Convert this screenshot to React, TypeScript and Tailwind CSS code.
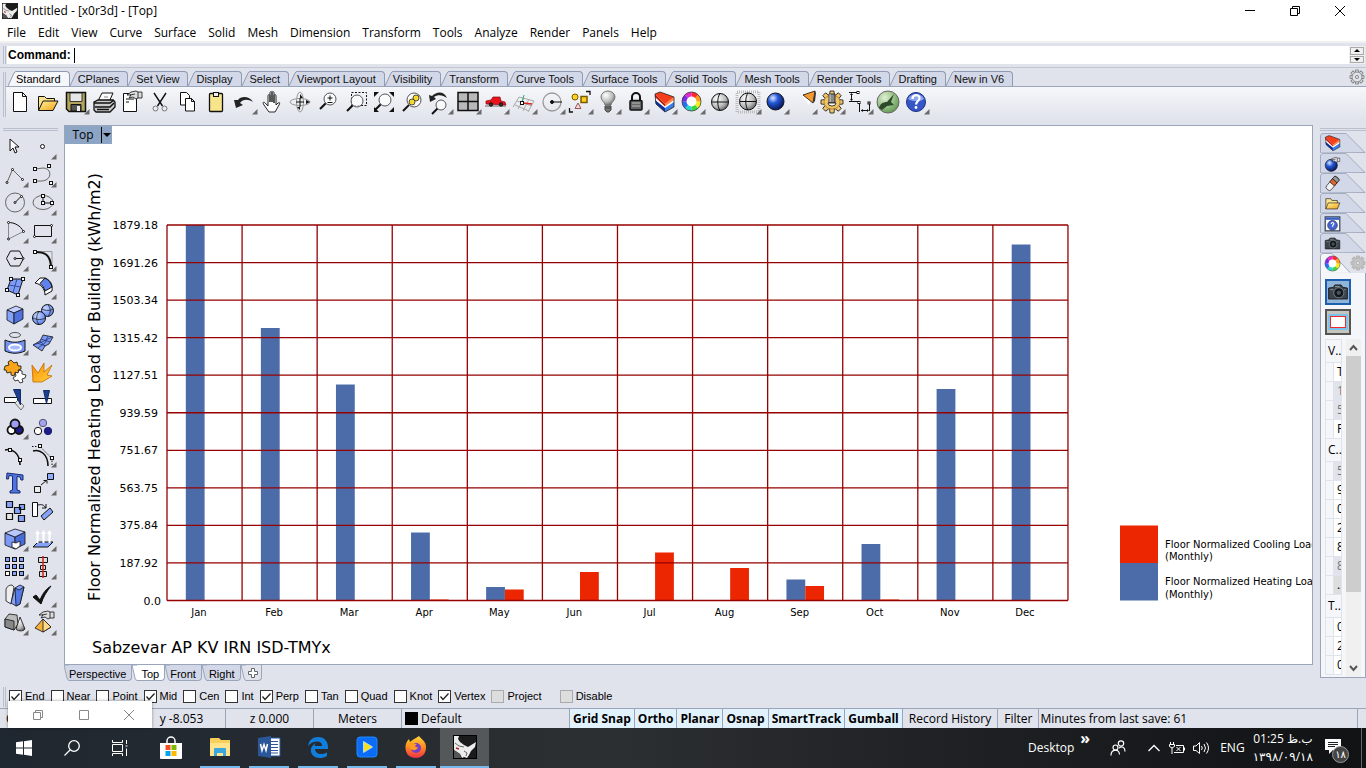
import { useState, type ReactNode } from 'react';

/* ---------- small drawing helpers ---------- */

function Icon({ flyout, children }: { flyout?: boolean; children: ReactNode }) {
  return (
    <svg viewBox="0 0 28 28" className="size-7 shrink-0" fill="none" stroke="#111" strokeWidth="1">
      {children}
      {flyout && <path d="M27.500 21v5.500h-5.500z" fill="#6a6a6a" stroke="none" />}
    </svg>
  );
}

function Sq({ x, y, s = 3 }: { x: number; y: number; s?: number }) {
  return <rect x={x - s / 2} y={y - s / 2} width={s} height={s} fill="#fff" />;
}

function Dot({ x, y }: { x: number; y: number }) {
  return <circle cx={x} cy={y} r="1" fill="#fff" />;
}

function Lens({ x = 16, y = 12, r = 5.5 }: { x?: number; y?: number; r?: number }) {
  return (
    <>
      <path d={`M${x - r * 0.7} ${y + r * 0.7}L${x - r - 4} ${y + r + 4}`} strokeWidth="2" />
      <circle cx={x} cy={y} r={r} fill="#fff" fillOpacity=".7" stroke="#555" />
    </>
  );
}

function ColorWheel({ cx, cy, r }: { cx: number; cy: number; r: number }) {
  const colors = ['#ff2a2a', '#ff9a1f', '#f4ec1c', '#3fd83a', '#25d6d0', '#2b6cf5', '#7a2be8', '#e829c4'];
  return (
    <g stroke="none">
      {colors.map((color, i) => {
        const a = ((i * 45 - 90) * Math.PI) / 180;
        const b = ((i * 45 - 44) * Math.PI) / 180;
        return (
          <path
            key={color}
            fill={color}
            d={`M${cx} ${cy}L${cx + r * Math.cos(a)} ${cy + r * Math.sin(a)}A${r} ${r} 0 0 1 ${cx + r * Math.cos(b)} ${cy + r * Math.sin(b)}Z`}
          />
        );
      })}
      <circle cx={cx} cy={cy} r={r} stroke="#222" strokeWidth=".7" />
      <circle cx={cx} cy={cy} r={r * 0.52} fill="#fff" />
    </g>
  );
}

function Layers() {
  return (
    <g stroke="none">
      <path d="M5 7l10 9 9-7v5l-9 7L5 11z" fill="#fff" />
      <path d="M5 12l10 8v4L6 16z" fill="#0b2f9e" />
      <path d="M15 20l9-6v5l-9 5z" fill="#3a7fe8" />
      <path d="M5 6l10 10v2.500L5 9z" fill="#b81c0c" />
      <path d="M24 9l-9 7v2.500l9-6.500z" fill="#ff8a4a" />
      <path d="M5 6l5-2 14 5-9 7z" fill="#f43e1c" />
      <path d="M5 6l5-2 14 5v10l-9 5-9-8z" fill="none" stroke="#222" strokeWidth=".8" />
    </g>
  );
}

function Gear({ className, fill = 'none' }: { className: string; fill?: string }) {
  const teeth = Array.from({ length: 8 }, (_, i) => i * 45);
  return (
    <svg viewBox="0 0 16 16" className={className} fill={fill} stroke="currentColor">
      {teeth.map((deg) => (
        <path key={deg} d="M6.500 3V1h3v2" transform={`rotate(${deg} 8 8)`} />
      ))}
      <circle cx="8" cy="8" r="5" />
      <circle cx="8" cy="8" r="1.600" fill="#e6e8ee" />
    </svg>
  );
}

function RhinoLogo({ className }: { className: string }) {
  return (
    <svg viewBox="0 0 24 24" className={className}>
      <rect x=".5" y=".5" width="23" height="23" fill="#1b1b1b" stroke="#000" />
      <path d="M1 1h5l-1 3 2 3 4 3 4 2 8-5-1 5-4 4-2 4-2 3-3-1-2 1-2-4-6-4z" fill="#ececec" />
      <path d="M1 15l6 4 1 4H1z" fill="#555" />
      <path d="M2 8l4 3 5 1M11 16l3 2-1 3" stroke="#666" fill="none" />
      <path d="M3 13l3 1" stroke="#c02020" strokeWidth="1.500" />
    </svg>
  );
}

function Camera() {
  return (
    <>
      <path d="M2 9l6-1 2-3h8l2 3 6 1v14H2z" fill="#3b434b" stroke="#111" />
      <circle cx="15" cy="15" r="6.500" fill="#1a1d20" stroke="#8a949c" />
      <circle cx="15" cy="15" r="3.500" fill="#44525e" stroke="#000" />
      <path d="M4 11h4M22 11h2M10 7h6" stroke="#9aa" />
    </>
  );
}

function Defs() {
  return (
    <svg className="absolute size-0" aria-hidden="true">
      <defs>
        <radialGradient id="gray" cx=".35" cy=".3" r=".8">
          <stop offset="0" stopColor="#fff" />
          <stop offset=".6" stopColor="#bbb" />
          <stop offset="1" stopColor="#555" />
        </radialGradient>
        <radialGradient id="blue" cx=".35" cy=".3" r=".75">
          <stop offset="0" stopColor="#dbe8ff" />
          <stop offset=".4" stopColor="#2458d8" />
          <stop offset="1" stopColor="#04124e" />
        </radialGradient>
        <radialGradient id="soft" cx=".35" cy=".3" r=".8">
          <stop offset="0" stopColor="#c6d5ff" />
          <stop offset="1" stopColor="#5479ea" />
        </radialGradient>
        <radialGradient id="green" cx=".35" cy=".3" r=".75">
          <stop offset="0" stopColor="#dff0d0" />
          <stop offset="1" stopColor="#5f9a50" />
        </radialGradient>
        <linearGradient id="gold" x2="1" y2="1">
          <stop offset="0" stopColor="#fff3a0" />
          <stop offset="1" stopColor="#f0a010" />
        </linearGradient>
        <linearGradient id="fire" x2="1" y2="1">
          <stop offset="0" stopColor="#ff8a00" />
          <stop offset="1" stopColor="#ffd23c" />
        </linearGradient>
        <linearGradient id="fox" x2="0" y2="1">
          <stop offset="0" stopColor="#ffd83a" />
          <stop offset=".5" stopColor="#ff8a1e" />
          <stop offset="1" stopColor="#f0304a" />
        </linearGradient>
      </defs>
    </svg>
  );
}

/* ---------- toolbars ---------- */

interface Tool {
  name: string;
  flyout?: boolean;
  art: ReactNode;
}

const hand = (
  <>
    <path d="M9 7l4-3 5-1 2 1h4v6h-4l-2 1-3-2-4 1 2-3z" fill="#ddd" strokeWidth=".8" />
    <path d="M12 7l5-1M20 4v6" strokeWidth=".8" />
  </>
);

const mainTools: Tool[] = [
  { name: 'New', art: <path d="M7.500 4.500h9l4 4v15h-13zM16.500 4.500v4h4" fill="#fff" /> },
  {
    name: 'Open',
    art: (
      <>
        <path d="M4.500 22V8.500h6l2 2h8V13" fill="#fbe38a" />
        <path d="M4.500 22.500L9 13h15l-5 9.500z" fill="url(#gold)" />
      </>
    ),
  },
  {
    name: 'Save',
    flyout: true,
    art: (
      <>
        <path d="M4.500 4.500h19v19H7l-2.500-2.500z" fill="#b3a55c" strokeWidth="1.500" />
        <path d="M8 5h12v8.500H8z" fill="#e6e6e6" strokeWidth=".8" />
        <path d="M9 16.500h10v6.500H9z" fill="#555" />
        <path d="M15 18h3v5h-3z" fill="#eee" stroke="none" />
      </>
    ),
  },
  {
    name: 'Print',
    art: (
      <>
        <path d="M8 13l4-8h11l-4 9z" fill="#fff" />
        <path d="M4 14l4-2h15l2 2v5l-5 5H6l-2-2z" fill="#ccc" strokeWidth="1.300" />
        <path d="M4 15h16l4-3M5 19h15l4-4M7 21.500h12" strokeWidth="1.500" />
        <path d="M14 9h4" stroke="#888" />
      </>
    ),
  },
  {
    name: 'Properties',
    art: (
      <>
        <path d="M5.500 5.500h13v18h-13zM8 11h8M8 14h3" fill="#fff" />
        {hand}
      </>
    ),
  },
  {
    name: 'Cut',
    art: (
      <>
        <path d="M8 5l8.500 13M20 5l-8.500 13" strokeWidth="1.400" />
        <circle cx="9.500" cy="20.500" r="2.500" stroke="#777" />
        <circle cx="18.500" cy="20.500" r="2.500" stroke="#777" />
      </>
    ),
  },
  {
    name: 'Copy',
    art: (
      <>
        <path d="M6.500 4.500h6l3 3v9.500h-9z" fill="#fff" />
        <path d="M11.500 10.500h6l3 3v9.500h-9zM17.500 10.500v3h3" fill="#fff" />
      </>
    ),
  },
  {
    name: 'Paste',
    art: (
      <>
        <rect x="7.500" y="5.500" width="13" height="18" rx="1" fill="#f8e48a" strokeWidth="1.300" />
        <rect x="11.500" y="4.500" width="5" height="4" fill="#eee" />
      </>
    ),
  },
  {
    name: 'Undo',
    flyout: true,
    art: <path d="M4 12l2 8 7-3-3-2c3-4 8-4 13-1-3-5-11-7-15-2z" fill="#222" stroke="none" />,
  },
  {
    name: 'Pan',
    art: (
      <path
        d="M11 24l-5-7c-2-3 0-4 2-1l2 2V8c0-2 2-2 2 0v6-9c0-2 2-2 2 0v9-9c0-2 2-2 2 0v10-7c0-2 2-2 2 0v9l2-2c2-1 2 0 1 2l-4 7z"
        fill="#fff"
        strokeWidth=".9"
      />
    ),
  },
  {
    name: 'Rotate view',
    art: (
      <>
        <ellipse cx="14" cy="14" rx="10" ry="3.500" stroke="#999" />
        <ellipse cx="14" cy="14" rx="3.500" ry="10" stroke="#999" />
        <path d="M14 10v9M10 14h8" />
        <path d="M14 6l3 4h-3zM14 22l-3-3h3zM20 12v4l4-2z" fill="#111" stroke="none" />
      </>
    ),
  },
  {
    name: 'Zoom dynamic',
    art: (
      <>
        <Lens x={16} y={11} r={6} />
        <path d="M16 7.500v5M13.500 10h5M13.500 14.500h5" />
      </>
    ),
  },
  {
    name: 'Zoom window',
    art: (
      <>
        <path d="M9.500 4.500h15v13h-15z" strokeDasharray="2 1.500" />
        <Lens x={15} y={13} r={6} />
      </>
    ),
  },
  {
    name: 'Zoom extents',
    art: (
      <>
        <path d="M4 9V4h5zM24 9V4h-5zM4 19v5h5zM24 19v5h-5z" fill="#111" stroke="none" />
        <Lens x={15} y={12} r={6} />
      </>
    ),
  },
  {
    name: 'Zoom selected',
    art: (
      <>
        <Lens x={16} y={12} r={7} />
        <circle cx="18" cy="10" r="3" fill="#f5d732" strokeWidth=".7" />
        <circle cx="14" cy="14" r="3" fill="#f5d732" strokeWidth=".7" />
      </>
    ),
  },
  {
    name: 'Undo view',
    flyout: true,
    art: (
      <>
        <path d="M3 7l1 7 6-3-2-2c4-3 9-2 13 1-3-7-10-7-15-2z" fill="#222" stroke="none" />
        <Lens x={15} y={17} r={5} />
      </>
    ),
  },
  {
    name: 'Four viewports',
    flyout: true,
    art: <path d="M4 4.500h20v18H4zM14 4.500v18M4 13.500h20" fill="#b9b9b9" strokeWidth="1.500" />,
  },
  {
    name: 'Set view',
    flyout: true,
    art: (
      <>
        <path d="M3 18h21" stroke="#aaa" strokeWidth="2" />
        <path d="M4 16v-3l5-1 2-3h7l1 4 4 1 1 3z" fill="#e8141c" stroke="#8a0a10" strokeWidth=".7" />
        <circle cx="9" cy="16.500" r="1.700" fill="#333" />
        <circle cx="19" cy="16.500" r="1.700" fill="#333" />
      </>
    ),
  },
  {
    name: 'CPlane',
    flyout: true,
    art: (
      <>
        <path d="M9 9l15 4M7 13l15 5M5 17l14 6M9 9l-6 10M14 10L8 21M19 11l-6 12M24 13l-6 11" stroke="#aaa" />
        <path d="M12 14l2-7" stroke="#2a7" />
        <path d="M13 15l9 1" stroke="#d22" strokeWidth="1.500" />
        <Sq x={12} y={15} />
      </>
    ),
  },
  {
    name: 'Circle',
    flyout: true,
    art: (
      <>
        <circle cx="14" cy="14" r="9" stroke="#999" strokeWidth="1.300" />
        <path d="M14 14h10" />
        <circle cx="14" cy="14" r="1.500" fill="#111" />
      </>
    ),
  },
  {
    name: 'Select',
    flyout: true,
    art: (
      <>
        <path d="M20 3.500h4V7M3.500 20v4H7" strokeWidth="1.300" />
        <circle cx="9" cy="9" r="3" fill="#ffd21e" stroke="#7a5a00" />
        <rect x="15" y="8.500" width="6" height="6" fill="#ffd21e" stroke="#7a5a00" strokeWidth="1.500" />
        <path d="M12 15l3 5.500H9z" fill="#f3ddd6" stroke="#955" />
      </>
    ),
  },
  {
    name: 'Hide',
    flyout: true,
    art: (
      <>
        <path d="M11 17c0-3-4-4-4-8a7 6 0 0 1 14 0c0 4-4 5-4 8z" fill="url(#gray)" stroke="#777" />
        <path d="M11 18h6v4l-2 2h-2l-2-2zM11 20h6" fill="#777" stroke="#444" />
      </>
    ),
  },
  {
    name: 'Lock',
    flyout: true,
    art: (
      <>
        <path d="M10 13V9a4 4 0 0 1 8 0v4" strokeWidth="2" />
        <rect x="8" y="12.500" width="12" height="9.500" rx="1" fill="#666" strokeWidth="1.500" />
        <path d="M10 15h8M10 18h8" stroke="#bbb" />
      </>
    ),
  },
  { name: 'Layers', flyout: true, art: <Layers /> },
  { name: 'Color', flyout: true, art: <ColorWheel cx={13.5} cy={13.5} r={9.5} /> },
  {
    name: 'Shade',
    art: (
      <>
        <circle cx="14" cy="14" r="8.500" fill="url(#gray)" />
        <path d="M6 14h16M14 5.500c-3 4-3 13 0 17" />
      </>
    ),
  },
  {
    name: 'Shade selected',
    flyout: true,
    art: (
      <>
        <path d="M3 4h22v20H3z" stroke="#bbb" strokeWidth="3" strokeDasharray="1 1" />
        <circle cx="14" cy="13.500" r="8.500" fill="url(#gray)" />
        <path d="M6 13.500h16M14 5c-3 4-3 13 0 17" />
      </>
    ),
  },
  { name: 'Render', flyout: true, art: <circle cx="13.500" cy="13.500" r="8.500" fill="url(#blue)" /> },
  {
    name: 'Spotlight',
    flyout: true,
    art: (
      <>
        <path d="M12 8l10-2-3 11z" fill="#fff" stroke="none" />
        <path d="M13 7l12-4-2 12z" fill="#f59a2c" strokeWidth=".8" />
        <path d="M25 3l-2 12 2-2 1-8z" fill="#333" stroke="none" />
      </>
    ),
  },
  {
    name: 'Options',
    flyout: true,
    art: (
      <g strokeWidth=".8" fill="#f0c468">
        {[0, 45, 90, 135, 180, 225, 270, 315].map((deg) => (
          <path key={deg} d="M11.500 8l.5-5h4l.5 5z" transform={`rotate(${deg} 14 14)`} />
        ))}
        <ellipse cx="14" cy="14" rx="8" ry="7" stroke="#a87a20" />
        <path d="M11 6h6v9h-6z" fill="#888" />
        <path d="M12 6v8" stroke="#eee" />
        <path d="M10 15a4 3 0 0 0 8 0z" fill="#fff" />
      </g>
    ),
  },
  {
    name: 'Dimension',
    flyout: true,
    art: (
      <>
        <path d="M3 4.500h9M3 13.500h10M5.500 6v6M13.500 14v10M23.500 15v8M15 22.500h7" />
        <path d="M4 7l1.500-2L7 7zM4 11l1.500 2L7 11zM17 21l-2 1.500 2 1.500zM21 21l2 1.500-2 1.500z" fill="#111" stroke="none" />
        <Sq x={12} y={4.5} s={2} />
        <Sq x={13} y={14.5} s={2} />
        <Sq x={23} y={15} s={2} />
      </>
    ),
  },
  {
    name: 'Grasshopper',
    art: (
      <>
        <circle cx="14" cy="14" r="11" fill="url(#green)" stroke="#666" />
        <path d="M5 20c1-4 4-6 8-6l7-8-3 8 3 3-7 1-5 4z" fill="#2c4a2a" stroke="none" />
      </>
    ),
  },
  {
    name: 'Help',
    flyout: true,
    art: (
      <>
        <circle cx="14" cy="14" r="9.500" fill="#3656c8" stroke="#1a2e80" />
        <path d="M6 11a8.500 7 0 0 1 16 0c-4 3-11 3-16 0z" fill="#8ba4ee" stroke="none" />
        <path d="M10.500 11c0-5 7-5 7-1 0 3-3 3-3.500 6.500" stroke="#fff" strokeWidth="2.200" />
        <circle cx="14" cy="19.500" r="1.400" fill="#fff" stroke="none" />
      </>
    ),
  },
];

const sideTools: Tool[] = [
  { name: 'Pointer', art: <path d="M9 6v12l3-3 2 5 2-1-2-5h4z" fill="#fff" /> },
  { name: 'Point', flyout: true, art: <circle cx="13.500" cy="13.500" r="2" fill="#fff" /> },
  {
    name: 'Polyline',
    flyout: true,
    art: (
      <>
        <path d="M6 21.500l5.500-13L21.500 18.500" stroke="#666" />
        <Dot x={6} y={21.5} />
        <Dot x={11.5} y={8.5} />
        <Dot x={21.5} y={18.5} />
      </>
    ),
  },
  {
    name: 'Curve',
    flyout: true,
    art: (
      <>
        <path d="M6 8l8-1c8 0 9 9 3 12-3 1.500-7 1-11 1" stroke="#666" />
        <Sq x={6} y={8} />
        <Sq x={20} y={5} />
        <Sq x={22} y={22} />
        <Sq x={6} y={20} />
      </>
    ),
  },
  {
    name: 'Circle',
    flyout: true,
    art: (
      <>
        <circle cx="14" cy="13.500" r="9.500" stroke="#666" />
        <path d="M14 13.500l6-6" />
        <Dot x={14} y={13.5} />
        <Dot x={20.5} y={7.5} />
      </>
    ),
  },
  {
    name: 'Ellipse',
    flyout: true,
    art: (
      <>
        <ellipse cx="14" cy="13.500" rx="10" ry="7" stroke="#666" />
        <path d="M14 7v7h9" />
        <Sq x={14} y={7} />
        <Sq x={14} y={14} />
        <Sq x={23} y={14} />
      </>
    ),
  },
  {
    name: 'Arc',
    flyout: true,
    art: (
      <>
        <path d="M7.500 22V5.500M7.500 22l15-7.500" stroke="#888" />
        <path d="M7.500 5.500c6 0 12 3 15 9" />
        <Dot x={7.5} y={5.5} />
        <Dot x={22.5} y={14.5} />
        <Dot x={7.5} y={22} />
      </>
    ),
  },
  {
    name: 'Rectangle',
    flyout: true,
    art: (
      <>
        <path d="M5.500 8.500h17v11h-17z" />
        <Dot x={22.5} y={8.5} />
        <Dot x={5.5} y={19.5} />
      </>
    ),
  },
  {
    name: 'Polygon',
    flyout: true,
    art: (
      <>
        <path d="M5.500 13.500l4-7.500h9l4 7.500-4 7.500h-9zM14 13.500h8" />
        <Dot x={14} y={13.5} />
        <Dot x={22} y={13.5} />
      </>
    ),
  },
  {
    name: 'Fillet',
    flyout: true,
    art: (
      <>
        <path d="M6 6.500h17v15" stroke="#999" />
        <path d="M6 7c9 0 15 2 16 14" strokeWidth="2" />
        <Sq x={6} y={7} />
        <Sq x={22} y={22} />
      </>
    ),
  },
  {
    name: 'Surface',
    flyout: true,
    art: (
      <>
        <path d="M10 6h12l-5 16-11-5z" fill="#7e9cf5" />
        <path d="M16 6l-4 13.500M8 12l11.500 2" stroke="#334c9c" />
        <Sq x={10} y={6} />
        <Sq x={22} y={6} />
        <Sq x={6} y={17} />
        <Sq x={17} y={22} />
      </>
    ),
  },
  {
    name: 'Revolve',
    flyout: true,
    art: (
      <>
        <path d="M6 10l5-5h5c5 2 8 6 7 13l-7 4c0-6-4-11-10-12z" fill="#fff" />
        <path d="M11 10.500L16 5c4 2 6 5 7 9l-7 4c-1-4-3-6-5-7.500z" fill="#5f82ee" />
      </>
    ),
  },
  {
    name: 'Box',
    flyout: true,
    art: (
      <g strokeWidth=".8">
        <path d="M6 9l9-4 7 3-9 4z" fill="#c0cfff" />
        <path d="M6 9l7 3v11l-7-4z" fill="#86a3fb" />
        <path d="M13 12l9-4v10l-9 5z" fill="#4f70dd" />
      </g>
    ),
  },
  {
    name: 'Boolean',
    flyout: true,
    art: (
      <>
        <circle cx="18.500" cy="9.500" r="6" fill="url(#soft)" />
        <circle cx="10" cy="17" r="6.500" fill="url(#soft)" />
        <path d="M4 17c4 2 9 2 12 0M10 10.500c-3 4-3 9 0 13M13 8c4 2 8 2 11 0M19 4c3 3 3 8 0 11" strokeWidth=".7" />
      </>
    ),
  },
  {
    name: 'Project',
    flyout: true,
    art: (
      <>
        <ellipse cx="14" cy="6" rx="5.500" ry="2.500" stroke="#555" />
        <path d="M4 11c7 3 13 3 20 0v11c-7 3-13 3-20 0z" fill="#7392f2" />
        <ellipse cx="14" cy="18.500" rx="6" ry="3" fill="#a7bbff" stroke="#fff" strokeWidth="2" />
      </>
    ),
  },
  {
    name: 'Mesh',
    flyout: true,
    art: (
      <>
        <path d="M4 16l7-4 3-6 10 2-4 7-4 2-3 5z" fill="#7c9aef" strokeWidth=".8" />
        <path d="M8 14l9 3M12 10l9 3M9 19l7-5 3-7M4 16l9-3 10-5M11 12l5 5" stroke="#263a80" strokeWidth=".8" />
      </>
    ),
  },
  {
    name: 'Join',
    art: (
      <g strokeWidth=".8">
        <path d="M4 9l4-1-1-3 3-2 3 3 3-1 1 4 3 0 0 3-3 1 1 3-4 0-1 3-3-1 0-3-4 1-1-3-2 0z" fill="#f8a51c" />
        <path d="M14 15l3 1 1-3 3 1v3l4 1-1 3-3 1 1 3-3 1-2-3-3 1-2-3 3-2z" fill="#fff" />
      </g>
    ),
  },
  {
    name: 'Explode',
    art: <path d="M3 8l6 8 6-10v9l8-7-5 10 5 1-10 6H4z" fill="url(#fire)" stroke="#c26a00" strokeWidth=".8" />,
  },
  {
    name: 'Trim',
    art: (
      <>
        <path d="M3.500 12.500h13v5h-13z" fill="#fff" />
        <path d="M17 15l6 6-3 4-6-7z" fill="#e4e4e4" stroke="#555" strokeWidth=".8" />
        <path d="M12.500 4.500h7V20z" fill="#1c3f8e" stroke="#122a66" />
      </>
    ),
  },
  {
    name: 'Split',
    art: (
      <>
        <path d="M4.500 13.500h18v5h-18z" fill="#fff" />
        <path d="M14.500 5.500h6l-3 13z" fill="#1c3f8e" stroke="#122a66" />
      </>
    ),
  },
  {
    name: 'Group',
    flyout: true,
    art: (
      <g strokeWidth="1.800">
        <circle cx="10.500" cy="17" r="4" fill="#fff" />
        <circle cx="18" cy="17" r="4" fill="#1d1d84" />
        <circle cx="14" cy="11" r="4.500" fill="#9d9df2" />
      </g>
    ),
  },
  {
    name: 'Ungroup',
    art: (
      <>
        <circle cx="14" cy="10" r="3.700" fill="#a3a3f5" stroke="#556" />
        <circle cx="9" cy="18" r="3.700" fill="#fff" />
        <circle cx="19" cy="18" r="3.700" fill="#1d1d84" stroke="#1d1d84" />
      </>
    ),
  },
  {
    name: 'Edit points',
    art: (
      <>
        <path d="M4 9c7-2 15 3 15 15" strokeWidth="1.600" />
        <Sq x={9} y={9} />
        <Sq x={19} y={19} />
      </>
    ),
  },
  {
    name: 'Control points',
    flyout: true,
    art: (
      <>
        <path d="M4 10c7-2 15 3 15 15" strokeWidth="1.600" />
        <path d="M3 5.500h8l12 12v8" strokeDasharray="1.500 1.500" />
        <Sq x={11} y={5} />
        <Sq x={23} y={17} />
      </>
    ),
  },
  {
    name: 'Text',
    art: (
      <path
        d="M6 4l16 2v5h-2l-1-3-3-.5V21l3 1v2H9v-2l2.500-1V7L8 6.500 7.500 10H5.500z"
        fill="#4f74e2"
        stroke="#182b70"
      />
    ),
  },
  {
    name: 'Move',
    flyout: true,
    art: (
      <>
        <path d="M18.500 4.500h6v6h-6z" fill="#8facff" />
        <path d="M5.500 17.500h6v6h-6z" fill="#ececec" />
        <path d="M12 16l6-5M14.500 11.500h3.500v3" />
      </>
    ),
  },
  {
    name: 'Copy',
    art: (
      <g strokeWidth="1.200">
        <path d="M5.500 4.500h6v6h-6zM18.500 7.500h5v5h-5zM17.500 18.500h6v6h-6zM13.500 10.500h6v6h-6z" fill="#86a3fb" />
        <path d="M5.500 16.500h6v6h-6z" fill="#e5e5e5" />
      </g>
    ),
  },
  {
    name: 'Rotate',
    art: (
      <>
        <path d="M3.500 5.500h5v14h-5z" fill="#fff" />
        <path d="M12 19l9-8 3 4-9 8z" fill="#86a3fb" />
        <path d="M9 8c4-1 6 0 8 3M17 7v4h-4" />
      </>
    ),
  },
  {
    name: 'Solid edit',
    flyout: true,
    art: (
      <g strokeWidth=".8">
        <path d="M4 8l10 4v12l-10-4z" fill="#7c9af5" />
        <path d="M14 12l10-5v12l-10 5z" fill="#4a6cd8" />
        <path d="M4 8l10-4 10 3-10 5z" fill="#b8c8ff" />
        <path d="M11 17l4 1 4-2v5l-4 3-4-2z" fill="#fff" />
      </g>
    ),
  },
  {
    name: 'Extrude',
    flyout: true,
    art: (
      <>
        <path d="M4 22l5-5h15l-5 5z" fill="#86a3fb" />
        <path d="M8.500 18V8M14.500 18V8M20.500 18V8" stroke="#fff" strokeWidth="2" />
        <path d="M6 9l2.500-4L11 9zM12 9l2.500-4L17 9zM18 9l2.500-4L23 9z" fill="#fff" stroke="none" />
      </>
    ),
  },
  {
    name: 'Array',
    flyout: true,
    art: (
      <>
        {[4.5, 11.5, 18.5].map((x) =>
          [4.5, 11.5, 18.5].map((y) => (
            <rect key={`${x}-${y}`} x={x} y={y} width="4" height="4" fill={x < 5 && y > 18 ? '#fff' : '#86a3fb'} />
          )),
        )}
      </>
    ),
  },
  {
    name: 'Align',
    flyout: true,
    art: (
      <>
        <path d="M9.500 4.500h9v5h-9zM11.500 12.500h5v4h-5zM10.500 18.500h7v5h-7z" fill="#ddd" />
        <path d="M14 3v22" stroke="#d02020" strokeWidth="1.500" />
      </>
    ),
  },
  {
    name: 'Bend',
    flyout: true,
    art: (
      <g strokeWidth=".8">
        <path d="M5 9c0-3 3-5 6-5l2 2-3 17-5-3z" fill="#eee" />
        <path d="M10 22l4-15 5-3 4 2-4 17-4 2z" fill="#86a3fb" />
        <path d="M14 7l4 2 5-3-4 17-4 2z" fill="#5578e4" />
      </g>
    ),
  },
  { name: 'Check', flyout: true, art: <path d="M4 16l3-2 4 5C14 12 17 8 22 5c-4 5-8 11-10 18z" fill="#111" /> },
  {
    name: 'Render mesh',
    flyout: true,
    art: (
      <g strokeWidth=".8">
        <path d="M4 10l4-5 8 1 1 9-4 6-9-3z" fill="#bbb" />
        <path d="M4 10l9 2v9l-9-3z" fill="#888" />
        <path d="M19 8l5 12c-2 3-8 2-9 0z" fill="url(#gray)" />
      </g>
    ),
  },
  {
    name: 'Analyze',
    flyout: true,
    art: (
      <>
        <path d="M6 19l8-9 8 8-8 5z" fill="#f4b23c" strokeWidth=".8" />
        <path d="M14 10v13l8-5z" fill="#ffd98a" strokeWidth=".8" />
        <g transform="translate(1 -1)">{hand}</g>
      </>
    ),
  },
];

const tabs = [
  'Standard', 'CPlanes', 'Set View', 'Display', 'Select', 'Viewport Layout', 'Visibility', 'Transform',
  'Curve Tools', 'Surface Tools', 'Solid Tools', 'Mesh Tools', 'Render Tools', 'Drafting', 'New in V6',
];

const menus = [
  'File', 'Edit', 'View', 'Curve', 'Surface', 'Solid', 'Mesh', 'Dimension', 'Transform',
  'Tools', 'Analyze', 'Render', 'Panels', 'Help',
];

function ToolTabs() {
  const [active, setActive] = useState('Standard');
  return (
    <div className="flex items-end pl-[2px] pr-px border-b border-[#9aa5ba] h-[19px]">
      {tabs.map((tab) => (
        <button
          key={tab}
          type="button"
          onClick={() => setActive(tab)}
          className={`flex items-end text-[11px] ${tab === active ? 'text-black' : 'text-[#111]'}`}
        >
          <svg viewBox="0 0 8 15" className="h-[15px] w-2" fill={tab === active ? '#f6f7fa' : '#d3d8e8'}>
            <path d="M0 15L6 2q1-1.500 2-1.500V15z" />
            <path d="M0 15L6 2q1-1.500 2-1.500" fill="none" stroke="#8f9bb3" />
          </svg>
          <span
            className={`h-[15px] pr-2 border-t border-r border-[#8f9bb3] rounded-tr leading-[15px] ${
              tab === active ? 'bg-[#f6f7fa]' : 'bg-[#d3d8e8]'
            }`}
          >
            {tab}
          </span>
        </button>
      ))}
      <Gear className="ml-auto mb-px size-4 text-[#888]" />
    </div>
  );
}

function Grip() {
  return <div className="w-[3px] shrink-0 border-x border-[#b9bfcc]" />;
}

function TitleBar() {
  return (
    <header className="flex h-[22px] items-center bg-white pl-[2px] text-xs">
      <RhinoLogo className="size-4" />
      <h1 className="ml-[5px]">Untitled - [x0r3d] - [Top]</h1>
      <div className="ml-auto flex pr-1">
        <button type="button" aria-label="Minimize" className="flex w-[45px] justify-center">
          <svg viewBox="0 0 10 10" className="size-[10px]" stroke="#000"><path d="M0 4.500h10" /></svg>
        </button>
        <button type="button" aria-label="Restore" className="flex w-[45px] justify-center">
          <svg viewBox="0 0 10 10" className="size-[10px]" stroke="#000" fill="none">
            <path d="M.5 2.500h7v7h-7zM2.500 2.500v-2h7v7h-2" />
          </svg>
        </button>
        <button type="button" aria-label="Close" className="flex w-[45px] justify-center">
          <svg viewBox="0 0 10 10" className="size-[10px]" stroke="#000"><path d="M0 0l10 10M10 0L0 10" /></svg>
        </button>
      </div>
    </header>
  );
}

function CommandLine() {
  return (
    <div className="flex h-[26px] border-t-2 border-[#f0f0f0] pl-[3px] pr-px pt-[3px] pb-[3px]">
      <Grip />
      <label className="ml-px flex flex-1 items-center bg-white pl-px text-xs font-bold font-['Liberation_Sans',sans-serif]">
        Command:
        <span className="ml-[3px] h-[15px] w-px bg-black" />
        <input type="text" className="w-full flex-1 bg-transparent font-normal outline-none" />
      </label>
      <div className="flex w-4 flex-col gap-px bg-[#f0f0f0] p-px">
        <button type="button" aria-label="Up" className="flex flex-1 items-center justify-center border border-[#aaa]">
          <svg viewBox="0 0 6 3" className="h-[3px] w-1.5"><path d="M0 3l3-3 3 3z" /></svg>
        </button>
        <button type="button" aria-label="Down" className="flex flex-1 items-center justify-center border border-[#aaa]">
          <svg viewBox="0 0 6 3" className="h-[3px] w-1.5"><path d="M0 0l3 3 3-3z" /></svg>
        </button>
      </div>
    </div>
  );
}

/* ---------- chart ---------- */

const axisTop = 225;
const axisBottom = 600.5;
const left = 167;
const step = 75.08;

const months = [
  { name: 'Jan', heating: 375.5, cooling: 0 },
  { name: 'Feb', heating: 272.5, cooling: 0 },
  { name: 'Mar', heating: 216, cooling: 0 },
  { name: 'Apr', heating: 68, cooling: 1 },
  { name: 'May', heating: 13.5, cooling: 11 },
  { name: 'Jun', heating: 0, cooling: 28.5 },
  { name: 'Jul', heating: 0, cooling: 48 },
  { name: 'Aug', heating: 0, cooling: 32.5 },
  { name: 'Sep', heating: 21, cooling: 14.5 },
  { name: 'Oct', heating: 56.5, cooling: 1 },
  { name: 'Nov', heating: 211.5, cooling: 0 },
  { name: 'Dec', heating: 356, cooling: 0 },
];

const ticks = [
  '1879.18', '1691.26', '1503.34', '1315.42', '1127.51', '939.59', '751.67', '563.75', '375.84', '187.92', '0.0',
];

function LoadChart() {
  return (
    <svg viewBox="65 126 1400 538" width="1400" height="538" className="max-w-none font-['DejaVu_Sans',sans-serif]">
      {months.map((m, i) => (
        <g key={m.name}>
          <rect x={left + step * i + 18.8} y={axisBottom - m.heating} width="18.800" height={m.heating} fill="#4c6ca9" />
          <rect x={left + step * i + 37.6} y={axisBottom - m.cooling} width="18.800" height={m.cooling} fill="#ec2600" />
          <text x={left + step * i + 32} y="616" textAnchor="middle" className="text-[10px]">
            {m.name}
          </text>
        </g>
      ))}
      <g stroke="#960000" strokeWidth="1.300">
        {ticks.map((t, i) => (
          <path key={t} d={`M${left} ${axisTop + 37.55 * i}H${left + step * 12}`} />
        ))}
        {Array.from({ length: 13 }, (_, i) => (
          <path key={i} d={`M${left + step * i} ${axisTop}V${axisBottom}`} />
        ))}
      </g>
      {ticks.map((t, i) => (
        <text key={t} x={i === 10 ? 161 : 158} y={axisTop + 37.55 * i + 4} textAnchor="end" className="text-[11px]">
          {t}
        </text>
      ))}
      <text transform="translate(100 601) rotate(-90)" className="text-[16px]">
        Floor Normalized Heating Load for Building (kWh/m2)
      </text>
      <text x="92" y="653" className="text-[16px]">Sabzevar AP KV IRN ISD-TMYx</text>
      <rect x="1120" y="525.500" width="38" height="37.500" fill="#ec2600" />
      <rect x="1120" y="563" width="38" height="37.500" fill="#4c6ca9" />
      <g className="text-[10px]">
        <text x="1165" y="548">Floor Normalized Cooling Load</text>
        <text x="1165" y="560">(Monthly)</text>
        <text x="1165" y="585">Floor Normalized Heating Load</text>
        <text x="1165" y="598">(Monthly)</text>
      </g>
    </svg>
  );
}

function ViewTabs() {
  return (
    <div className="flex h-[17px] text-[11px]">
      {['Perspective', 'Top', 'Front', 'Right', '+'].map((tab) => {
        const fill = tab === 'Top' ? '#fff' : tab === '+' ? '#e0e3eb' : '#d3d8e8';
        return (
          <button key={tab} type="button" aria-label={tab === '+' ? 'New viewport' : tab} className="flex h-4">
            <svg viewBox="0 0 5 16" className="h-4 w-[5px]" fill={fill} stroke="#9aa5ba">
              <path d="M5 0H0l3 13q1 2.500 2 2.500" />
            </svg>
            {tab === '+' ? (
              <span className="flex h-4 w-4 items-center justify-center border-r border-b border-[#9aa5ba] rounded-br">
                <svg viewBox="0 0 10 10" className="size-[10px]" fill="#fff" stroke="#666">
                  <path d="M3.500.5h3v3h3v3h-3v3h-3v-3h-3v-3h3z" />
                </svg>
              </span>
            ) : (
              <span
                className={`h-4 border-r border-b border-[#9aa5ba] rounded-br pr-[5px] leading-[18px] ${
                  tab === 'Top' ? 'bg-white pl-1' : 'bg-[#d3d8e8]'
                } ${tab === 'Right' ? 'pl-[2px]' : ''}`}
              >
                {tab}
              </span>
            )}
          </button>
        );
      })}
    </div>
  );
}

/* ---------- right panel ---------- */

const panelTabs: Tool[] = [
  { name: 'Layers', art: <g transform="translate(-4 -4) scale(1.250)"><Layers /></g> },
  {
    name: 'Rendering',
    art: (
      <>
        <circle cx="12" cy="17" r="10" fill="url(#blue)" />
        <g transform="translate(2 1)">{hand}</g>
      </>
    ),
  },
  {
    name: 'Materials',
    art: (
      <g transform="rotate(-50 14 14)">
        <rect x="1" y="9" width="26" height="10" rx="4" fill="#f2f2f2" />
        <rect x="13" y="9" width="7" height="10" fill="#e0622c" />
        <rect x="20" y="9" width="6" height="10" fill="#999" />
      </g>
    ),
  },
  {
    name: 'Libraries',
    art: (
      <>
        <path d="M3 23V6h8l2 3h9v4" fill="#fbe38a" />
        <path d="M3 23l4-10h19l-4 10z" fill="url(#gold)" />
      </>
    ),
  },
  {
    name: 'Help',
    art: (
      <>
        <path d="M2 3h24v23H2z" fill="#fff" stroke="#345" strokeWidth="2" />
        <path d="M3 4h22v4H3z" fill="#3760c8" stroke="none" />
        <circle cx="14" cy="17" r="8" fill="#4464d8" stroke="#223" />
        <path d="M12 15c0-4 5-3 4 0-1 1.500-2 2-2 4.500" stroke="#fff" strokeWidth="2" />
      </>
    ),
  },
  { name: 'Camera', art: <Camera /> },
  { name: 'Display', art: <ColorWheel cx={14} cy={14} r={12.5} /> },
];

const rows: { text: string; kind: 'head' | 'cell' | 'gray' | 'button' }[] = [
  { text: 'V..', kind: 'head' },
  { text: 'T', kind: 'cell' },
  { text: '1', kind: 'gray' },
  { text: '5', kind: 'gray' },
  { text: 'P', kind: 'cell' },
  { text: 'C..', kind: 'head' },
  { text: '5', kind: 'gray' },
  { text: '9', kind: 'cell' },
  { text: '0', kind: 'cell' },
  { text: '2', kind: 'cell' },
  { text: '8', kind: 'cell' },
  { text: '8', kind: 'gray' },
  { text: '...', kind: 'button' },
  { text: 'T..', kind: 'head' },
  { text: '0', kind: 'cell' },
  { text: '2', kind: 'cell' },
  { text: '0', kind: 'cell' },
];

const cellStyles = {
  head: '',
  cell: 'bg-white',
  gray: 'bg-[#e0e3eb] text-[#777]',
  button: 'bg-[#ddd]',
};

function SidePanel() {
  return (
    <aside className="flex w-[46px] shrink-0 flex-col pt-[7px] pb-1">
      <div className="h-[3px] border-y border-[#b9bfcc]" />
      <div className="mt-[2px]">
        {panelTabs.map((t, i) => {
          const on = i === panelTabs.length - 1;
          return (
            <button key={t.name} type="button" aria-label={t.name} className="relative flex h-5 w-full items-center pl-1">
              <svg viewBox="0 0 46 20" className="absolute inset-0 h-5 w-[46px]" fill={on ? '#f5f6f9' : '#d3d8e8'} stroke="#a3acbf">
                {on ? <path d="M.5 20V3Q.5.5 3 .5h9l18 19" /> : <path d="M.5 20V3Q.5.5 3 .5h23l19 19z" />}
              </svg>
              <svg viewBox="0 0 28 28" className="relative size-[17px]" fill="none" stroke="#111">
                {t.art}
              </svg>
              {on && <Gear className="relative ml-auto size-4 text-[#b5b5b5]" fill="#c4c4c4" />}
            </button>
          );
        })}
      </div>
      <div className="flex flex-1 flex-col border border-[#9aa5ba] border-t-0 bg-[#f5f6f9] pl-1 pt-[6px] min-h-0 overflow-hidden">
        <button type="button" aria-label="Viewport properties" className="grid size-[26px] place-items-center border-2 border-[#1b5fae] bg-[#90b5d8]">
          <svg viewBox="0 0 28 28" className="size-[22px]" fill="none"><Camera /></svg>
        </button>
        <button type="button" aria-label="Frame" className="mt-1 grid size-[26px] place-items-center border-2 border-[#555] bg-[#c5c5c0]">
          <span className="grid h-4 w-5 place-items-center bg-[#7cc3ea]">
            <span className="h-3 w-4 border border-[#ee2a2a] bg-white" />
          </span>
        </button>
        <div className="mt-1 flex min-h-0 flex-1">
          <table className="w-[17px] shrink-0 table-fixed border-collapse self-start text-xs font-['Open_Sans',sans-serif]">
            <tbody>
              {rows.map((r, i) => (
                <tr key={i}>
                  {r.kind === 'head' ? (
                    <th colSpan={2} className="h-[23px] border border-[#e0e3eb] p-0 pl-[2px] text-left font-normal leading-4 whitespace-nowrap">
                      {r.text}
                    </th>
                  ) : (
                    <>
                      <td className="h-[19px] w-[9px] border border-[#e0e3eb] p-0" />
                      <td className={`h-[19px] border border-[#e0e3eb] p-0 ${cellStyles[r.kind]}`}>
                        <div className="h-[18px] w-[7px] overflow-hidden pl-[3px] leading-[18px]">{r.text}</div>
                      </td>
                    </>
                  )}
                </tr>
              ))}
            </tbody>
          </table>
          <div className="ml-1 flex w-[15px] flex-col items-center bg-[#f0f0f0]">
            <svg viewBox="0 0 15 17" className="h-[17px]" fill="none" stroke="#555" strokeWidth="2"><path d="M4 11l3.500-4 3.500 4" /></svg>
            <div className="h-[236px] w-full bg-[#cdcdcd]" />
            <svg viewBox="0 0 15 17" className="mt-auto h-[17px]" fill="none" stroke="#555" strokeWidth="2"><path d="M4 6l3.500 4L11 6" /></svg>
          </div>
        </div>
      </div>
    </aside>
  );
}

/* ---------- status rows ---------- */

const snaps = [
  { name: 'End', on: true }, { name: 'Near' }, { name: 'Point' }, { name: 'Mid', on: true }, { name: 'Cen' },
  { name: 'Int' }, { name: 'Perp', on: true }, { name: 'Tan' }, { name: 'Quad' }, { name: 'Knot' },
  { name: 'Vertex', on: true }, { name: 'Project', off: true }, { name: 'Disable', off: true },
];

function SnapRow() {
  return (
    <div className="flex h-[26px] gap-[3px] pl-[3px] pt-[5px] text-[11px]">
      <div className="flex h-5"><Grip /></div>
      <div className="flex h-[18px] items-center gap-[6px]">
        {snaps.map((s) => (
          <label key={s.name} className={`flex items-center gap-[3px] ${s.name === 'Disable' ? 'ml-3' : ''}`}>
            <span className="relative flex size-[13px]">
              <input
                type="checkbox"
                defaultChecked={s.on}
                disabled={s.off}
                className="peer size-[13px] appearance-none border border-[#333] bg-white disabled:border-[#aaa] disabled:bg-[#ddd]"
              />
              <svg viewBox="0 0 13 13" className="pointer-events-none absolute inset-0 hidden peer-checked:block" fill="none" stroke="#222" strokeWidth="1.300">
                <path d="M2.500 6.500L5 9.500l5.500-6" />
              </svg>
            </span>
            {s.name}
          </label>
        ))}
      </div>
    </div>
  );
}

const toggles = ['Grid Snap', 'Ortho', 'Planar', 'Osnap', 'SmartTrack', 'Gumball'];

function StatusBar() {
  return (
    <div className="flex h-5 border-t border-[#9aa5ba] text-xs leading-5 whitespace-nowrap *:border-r *:border-[#9aa5ba] font-['Open_Sans','Noto_Sans',sans-serif]">
      <span className="w-[138px] border-r-0! pl-1.5">CPlane</span>
      <span className="w-[88px] text-center">y -8.053</span>
      <span className="w-[88px] text-center">z 0.000</span>
      <span className="w-[88px] text-center">Meters</span>
      <span className="flex w-[168px] items-center gap-[3px] pl-[3px]">
        <span className="size-[13px] bg-black" />
        Default
      </span>
      {toggles.map((t) => (
        <button key={t} type="button" className="bg-[#e2f2fc] px-[3px] font-bold">{t}</button>
      ))}
      <button type="button" className="px-[6px]">Record History</button>
      <button type="button" className="px-[6px]">Filter</button>
      <span className="mr-2 flex-1 pl-px">Minutes from last save: 61</span>
    </div>
  );
}

/* ---------- taskbar ---------- */

const apps: { name: string; open?: boolean; art: ReactNode }[] = [
  {
    name: 'Store',
    art: (
      <>
        <path d="M8 8V5a4 4 0 0 1 8 0v3" fill="none" stroke="#fff" strokeWidth="1.500" />
        <path d="M1 7h22v15q0 1-1 1H2q-1 0-1-1z" fill="#fff" />
        <path d="M6.500 9h5v5h-5z" fill="#f25022" />
        <path d="M12.500 9h5v5h-5z" fill="#7fba00" />
        <path d="M6.500 15h5v5h-5z" fill="#00a4ef" />
        <path d="M12.500 15h5v5h-5z" fill="#ffb900" />
      </>
    ),
  },
  {
    name: 'Explorer',
    open: true,
    art: (
      <>
        <path d="M2 4q0-1 1-1h8l2 2h9v16H2z" fill="#f7cf5a" />
        <path d="M2 8h20v13H2z" fill="#ffe48c" />
        <path d="M6 21v-7q0-1 1-1h10q1 0 1 1v7h-3v-3H9v3z" fill="#3aa7e0" />
      </>
    ),
  },
  {
    name: 'Word',
    open: true,
    art: (
      <>
        <path d="M12 3h11v18H12z" fill="#fff" stroke="#2b579a" />
        <path d="M14 6.500h7M14 9.500h7M14 12.500h7M14 15.500h7M14 18h7" stroke="#2b579a" />
        <path d="M1 3l13-2v22L1 21z" fill="#2b579a" />
        <path d="M3.500 9l1.500 6.500 2-6 2 6L10.500 9" fill="none" stroke="#fff" strokeWidth="1.500" />
      </>
    ),
  },
  {
    name: 'Edge',
    open: true,
    art: (
      <path
        d="M2 11C3 5 7 2 12 2c7 0 10 5 10 10v2H9c0 3 3 5 6 5 2 0 4-.5 6-1.500V21c-2 1.500-5 2-7 2-7 0-10-5-9-9 .5-3 3-5 5-6-1 1-1.500 2-1.500 3H16c0-3-1.500-4.500-5-4.500-3.500 0-7 2-9 4.500z"
        fill="#0f7fdb"
      />
    ),
  },
  {
    name: 'Player',
    open: true,
    art: (
      <>
        <rect x="2" y="2" width="20" height="20" rx="3" fill="#0b6cf7" stroke="#1d8bff" />
        <path d="M8.500 6.500v11l9-5.500z" fill="#f4e11f" stroke="#c8e8ff" strokeWidth=".8" />
      </>
    ),
  },
  {
    name: 'Firefox',
    open: true,
    art: (
      <>
        <path d="M12 3l3-2c1 2 5 4 6.500 8 2 7-2 14-9.500 14S1 18 1.500 11C2 8 3 6 5 4l1 3c2-2 4-3 6-4z" fill="url(#fox)" />
        <circle cx="12" cy="13" r="5" fill="#7540c8" />
        <path d="M6 8c3 0 5 0 7 2-3 0-2 3 1 2-1 4-6 4-8 1z" fill="#ff9a22" />
      </>
    ),
  },
];

function Taskbar() {
  return (
    <nav className="flex h-10 items-stretch bg-linear-to-r from-[#1f2730] via-[#2c2f31] via-45% to-[#101214] text-xs text-white font-['Open_Sans','DejaVu_Sans',sans-serif]">
      <button type="button" aria-label="Start" className="grid w-12 place-items-center">
        <svg viewBox="0 0 16 16" className="size-4" fill="#fff"><path d="M0 2.300l7-1v6.200H0zM8 1.200L16 0v7.500H8zM0 8.500h7v6.200l-7-1zM8 8.500h8V16l-8-1.200z" /></svg>
      </button>
      <button type="button" aria-label="Search" className="grid w-12 place-items-center">
        <svg viewBox="0 0 16 16" className="size-4" fill="none" stroke="#fff" strokeWidth="1.300"><circle cx="10" cy="6" r="5.300" /><path d="M6 10L.5 15.500" /></svg>
      </button>
      <button type="button" aria-label="Task view" className="mr-[2px] grid w-12 place-items-center">
        <svg viewBox="0 0 16 16" className="size-4" fill="none" stroke="#fff"><path d="M.5 0v2.500h10V0M.5 4.500h10v7H.5zM.5 16v-2.500h10V16M14.500 0v4M14.500 8.500V16M13.500 6h2" /></svg>
      </button>
      {apps.map((a) => (
        <button key={a.name} type="button" aria-label={a.name} className="flex w-[49px] flex-col items-center">
          <svg viewBox="0 0 24 24" className="my-auto size-6">{a.art}</svg>
          {a.open && <span className="h-[2px] w-10 bg-[#76b9ed]" />}
        </button>
      ))}
      <button type="button" aria-label="Rhino" className="flex w-[49px] flex-col items-center border-b-2 border-[#76b9ed] bg-[#54585b]">
        <RhinoLogo className="my-auto size-6" />
      </button>
      <div className="ml-auto flex items-center">
        <span>Desktop</span>
        <span className="ml-1.5 mb-5 text-base leading-4 font-bold">»</span>
        <svg viewBox="0 0 16 16" className="ml-5 size-4" fill="none" stroke="#fff" strokeWidth="1.200">
          <circle cx="5.500" cy="7.500" r="2.500" /><path d="M1 15.500c0-7 8.500-7 8.500-1" />
          <circle cx="11" cy="3.500" r="2.700" /><path d="M9 8c3-2 6-1 6 3.500" />
        </svg>
        <svg viewBox="0 0 12 8" className="ml-[22px] h-2 w-3" fill="none" stroke="#fff" strokeWidth="1.300"><path d="M.5 7L6 1.500 11.500 7" /></svg>
        <svg viewBox="0 0 16 12" className="ml-[9px] h-3 w-4" fill="none" stroke="#fff">
          <path d="M1.500 0v2M4.500 0v2M.5 2.500h5v2q-2.500 3-5 0zM3 6v6M7 3.500h7.500v7H5M15.500 5.500v3M7.500 5l4 4M11.500 5l-4 4" />
        </svg>
        <svg viewBox="0 0 16 12" className="ml-2 h-3 w-4" fill="none" stroke="#fff"><path d="M.5 4h2.500L6.500.5v11L3 8.500H.5zM8.500 4q1.500 2 0 4M11 2q3 4 0 8M13.500.5q4 5.500 0 11" /></svg>
        <span className="ml-[11px]">ENG</span>
        <span className="ml-2 flex flex-col items-center leading-[18px]">
          <span>01:25 ب.ظ</span>
          <span>۱۳۹۸/۰۹/۱۸</span>
        </span>
        <span className="relative ml-3 mr-3 h-5 w-6">
          <svg viewBox="0 0 16 16" className="size-4" fill="#fff"><path d="M0 1h16v11H8l-4 4v-4H0z" /><path d="M3 4.500h10M3 6.500h10M3 8.500h7" stroke="#222" /></svg>
          <span className="absolute left-[7px] top-2 grid size-[17px] place-items-center rounded-full border border-[#999] bg-[#444] text-[10px]">۱۸</span>
        </span>
        <span className="mr-1 h-10 w-px bg-[#666]" />
      </div>
    </nav>
  );
}

function FloatingWindow() {
  return (
    <div className="absolute bottom-10 left-2 flex h-[27px] w-36 items-center justify-between bg-white pl-[25px] pr-[18px] shadow-[0_0_3px_#0006]">
      <button type="button" aria-label="Restore window">
        <svg viewBox="0 0 10 10" className="size-[10px]" stroke="#888" fill="none"><path d="M.5 2.500h7v7h-7zM2.500 2.500v-2h7v7h-2" /></svg>
      </button>
      <button type="button" aria-label="Maximize window">
        <svg viewBox="0 0 10 10" className="size-[10px]" stroke="#888" fill="none"><path d="M.5.5h9v9h-9z" /></svg>
      </button>
      <button type="button" aria-label="Close window">
        <svg viewBox="0 0 10 10" className="size-[10px]" stroke="#888"><path d="M0 0l10 10M10 0L0 10" /></svg>
      </button>
    </div>
  );
}

export default function App() {
  return (
    <div className="relative flex h-screen flex-col overflow-hidden bg-[#e0e3eb] text-black font-['Liberation_Sans',Arial,sans-serif]">
      <Defs />
      <div className="font-['Open_Sans','Noto_Sans',sans-serif]">
        <TitleBar />
        <nav className="flex h-[19px] items-center gap-3 bg-white pl-[7px] pt-[2px] text-xs">
          {menus.map((m) => (
            <button key={m} type="button">{m}</button>
          ))}
        </nav>
      </div>
      <CommandLine />
      <div className="flex h-[54px] border-t border-[#c2c6d0]">
        <div className="flex py-1 pl-[3px]"><Grip /></div>
        <div className="min-w-0 flex-1">
          <ToolTabs />
          <div className="flex h-[34px] bg-linear-to-b from-[#f6f7fa] to-[#e0e3eb] pt-px">
            {mainTools.map((t) => (
              <button key={t.name} type="button" aria-label={t.name} className="h-7">
                <Icon flyout={t.flyout}>{t.art}</Icon>
              </button>
            ))}
          </div>
        </div>
      </div>
      <div className="flex min-h-0 flex-1">
        <div className="w-16 shrink-0 pt-[7px] pl-px">
          <div className="mb-[2px] ml-[2px] mr-1.5 h-[3px] border-y border-[#b9bfcc]" />
          <div className="grid grid-cols-[28px_28px]">
            {sideTools.map((t) => (
              <button key={t.name} type="button" aria-label={t.name} className="h-7">
                <Icon flyout={t.flyout}>{t.art}</Icon>
              </button>
            ))}
          </div>
        </div>
        <div className="flex min-w-0 flex-1 flex-col pt-1">
          <main className="relative min-h-0 flex-1 overflow-hidden border border-[#9aa5ba] bg-white">
            <LoadChart />
            <button type="button" className="absolute left-0 top-0 flex h-[18px] items-center bg-[#8ca5c4] text-xs font-['Open_Sans',sans-serif]">
              <span className="w-9 text-center">Top</span>
              <span className="flex h-4 w-[11px] items-center justify-center border-l border-black">
                <svg viewBox="0 0 8 4" className="h-1 w-2"><path d="M0 0h8L4 4z" /></svg>
              </span>
            </button>
          </main>
          <ViewTabs />
        </div>
        <div className="w-[7px] shrink-0" />
        <SidePanel />
      </div>
      <SnapRow />
      <StatusBar />
      <Taskbar />
      <FloatingWindow />
    </div>
  );
}
